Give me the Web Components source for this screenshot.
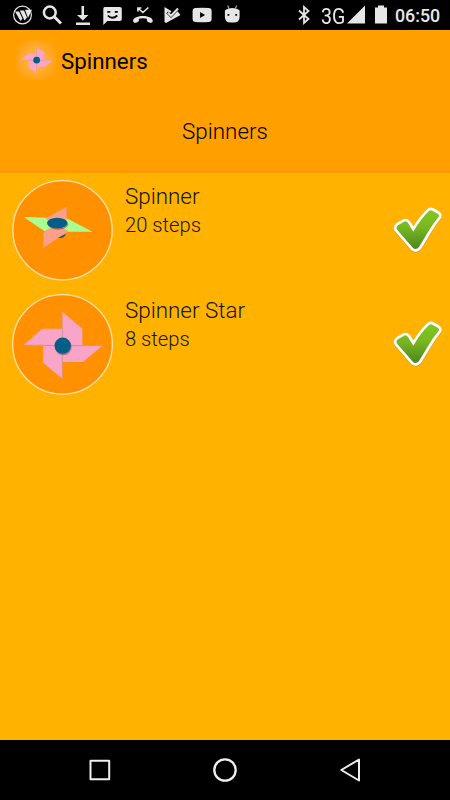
<!DOCTYPE html>
<html lang="en">
<head>
<meta charset="utf-8">
<title>Spinners</title>
<style>
  html, body {
    margin: 0;
    height: 100%;
    overflow: hidden;
    background: #ffb300;
  }
</style>
</head>
<body>
<phone-screen>
  <status-bar slot="status" time="06:50" network="3G"></status-bar>
  <app-header label="Spinners">Spinners</app-header>
  <spinner-row steps="20" art="spinner">Spinner</spinner-row>
  <spinner-row steps="8" art="star">Spinner Star</spinner-row>
  <nav-bar slot="nav"></nav-bar>
</phone-screen>
<script>
"use strict";

const starBlades = `
  <g stroke="#c98f9f" stroke-width="1.2">
    <path stroke="none" fill="#f8a5c8" d="M187 80L247 131V182H187ZM187 182H307L249 231H187ZM187 182V281L129 233V182ZM187 182L71 180L127 131H187Z"/>
    <path stroke-width="2.6" d="M187 131V231M129 181L187 182H247"/>
    <path d="M187 84V131M187 231V277M75 180H129M247 182H303"/>
  </g>`;

const art = {
  star: `
    <svg viewBox="36 27 303 303">
      <circle cx="187.5" cy="178" r="149.5" fill="#ff9000" stroke="#ffdfab" stroke-width="4"/>
      ${starBlades}
      <circle cx="190" cy="186" r="25" fill="#803c42" opacity=".5" filter="blur(2px)"/>
      <circle cx="188" cy="182" r="24.5" fill="#005f87"/>
    </svg>`,
  spinner: `
    <svg viewBox="36 45 303 303">
      <circle cx="187.5" cy="195.500" r="149" fill="#ff9000" stroke="#ffdfab" stroke-width="4"/>
      <path fill="#aaff90" d="M71 156L143 158L160 186L134 199ZM199 159L277 200H203L175 188Z"/>
      <path fill="#ff9e89" d="M200 125V180L165 183L137 160ZM131 201L152 189H190L205 199L129 249Z"/>
      <path fill="#005f87" d="M174 219L197 206C197 214 186 221 174 219Z"/>
      <ellipse cx="174" cy="178" rx="31" ry="16" fill="#6b4538" opacity=".55" filter="blur(2px)"/>
      <ellipse cx="171.500" cy="174" rx="30.500" ry="16" fill="#005f87"/>
    </svg>`
};

class PhoneScreen extends HTMLElement {
  constructor() {
    super();
    this.attachShadow({ mode: 'open' }).innerHTML = `
    <style>
      :host {
        display: flex;
        flex-direction: column;
        width: 450px;
        height: 800px;
        background: #ffb300;
        color: #000;
        font-family: Roboto, sans-serif;
      }
      main {
        flex: 1;
        min-height: 0;
      }
    </style>
    <slot name="status"></slot>
    <main><slot></slot></main>
    <slot name="nav"></slot>
    `;
  }
}

class StatusBar extends HTMLElement {
  connectedCallback() {
    this.attachShadow({ mode: 'open' }).innerHTML = `
    <style>
      :host {
        display: flex;
        justify-content: space-between;
        height: 30px;
        box-sizing: border-box;
        padding: 0 10px 0 12px;
        background: #000;
        color: #e8e8e8;
      }
      div {
        display: flex;
        align-items: center;
      }
      .notifications {
        gap: 7.9px;
      }
      svg {
        display: block;
        width: 22px;
        height: 30px;
        fill: #e6e6e6;
      }
      .network {
        display: block;
        font-size: 22.5px;
        line-height: 30px;
        padding-top: 1px;
        width: 26px;
        margin-left: 10px;
        transform: scaleX(.87);
        transform-origin: left;
      }
      .signal { width: 18px; }
      .bluetooth { width: 14px; }
      .battery { width: 12px; margin-left: 10px; }
      .time {
        font-size: 17.8px;
        font-weight: 500;
        line-height: 30px;
        width: 45px;
        margin-left: 8px;
        padding-top: 1px;
        white-space: nowrap;
      }
    </style>
    <div class="notifications">
      <svg viewBox="12 0 22 30"><circle cx="22.500" cy="15" r="8.900" fill="none" stroke="#e6e6e6" stroke-width="1.200"/><path d="M15 11.500H19L22.500 18.500L20.500 21ZM19.800 10.500H24L27 17.500L24.500 20.500ZM25 9.800H32L28 18Z"/></svg>
      <svg viewBox="42 0 22 30"><circle cx="49.800" cy="12.500" r="5.900" fill="none" stroke="#e6e6e6" stroke-width="2.500"/><path d="M54 16.500L61 23.500" stroke="#e6e6e6" stroke-width="3"/></svg>
      <svg viewBox="72 0 22 30"><path d="M81.500 6H84V15H88.500L82.800 20.500L77 15H81.500ZM76 22.500H90V25H76Z"/></svg>
      <svg viewBox="101.700 0 22 30"><path d="M104.500 7H119.500Q121.500 7 121.500 9V19Q121.500 21 119.500 21H107L103 25V9Q103 7 104.500 7Z"/><path d="M107 11.800H110M114.500 11.800H117.500M107.500 15.500Q112 20 117 15.500" fill="none" stroke="#000" stroke-width="1.700"/></svg>
      <svg viewBox="131.600 0 22 30"><path d="M133 22C131.500 19.500 135 16 142.500 16S153.500 19.500 152 22L150.500 23Q147.500 22.500 146.500 21V18.800Q142.500 17.600 138.500 18.800V21Q137.500 22.500 134.500 23Z"/><path d="M137.500 11.500V8H141M138 8.500L142.500 12.500L148 7.500" fill="none" stroke="#e6e6e6" stroke-width="1.600"/></svg>
      <svg viewBox="161.500 0 22 30"><path fill-rule="evenodd" d="M165 7L172 11.200L170.500 13L168.500 11.500L166.800 13.200L171.500 18L178 11.200L181 15L166.500 23L165 22Z"/><path d="M168.300 12.800L171.500 15.800L178.500 8.500" fill="none" stroke="#e6e6e6" stroke-width="2"/></svg>
      <svg viewBox="191.400 0 22 30"><path fill-rule="evenodd" d="M196 8Q202.500 7.300 209 8Q212 8 212 11V19Q212 22 209 22Q202.500 22.700 196 22Q193 22 193 19V11Q193 8 196 8ZM200.500 12V18L205.500 15Z"/></svg>
      <svg viewBox="221.300 0 22 30"><path fill-rule="evenodd" d="M225.200 10.500Q227 9 229 8.500Q232.500 7.700 236 8.500Q238.500 9 239.900 10.500V17Q239.900 22.500 234 22.500H231Q225.200 22.500 225.200 17ZM227.800 14V15.800H229.600V14ZM235.600 14V15.800H237.400V14Z"/><path d="M229.500 9L228 5.500M235.500 9L237 5.500" stroke="#a8a8a8" stroke-width="1.200"/></svg>
    </div>
    <div>
      <svg class="bluetooth" viewBox="297 0 14 30"><path d="M299 10.500L308.500 19L304 23V7L308.500 11L299 19.500" fill="none" stroke="#e6e6e6" stroke-width="1.800"/></svg>
      <span class="network">${this.getAttribute('network')}</span>
      <svg class="signal" viewBox="347 0 18 30"><path d="M347 23.500L365 5.500V23.500Z"/></svg>
      <svg class="battery" viewBox="375 0 12 30"><path d="M378 5.500H384V7.500H387V23.500H375V7.500H378Z"/></svg>
      <span class="time">${this.getAttribute('time')}</span>
    </div>
    `;
  }
}

class AppHeader extends HTMLElement {
  connectedCallback() {
    this.attachShadow({ mode: 'open' }).innerHTML = `
    <style>
      :host {
        display: block;
        height: 143px;
        box-sizing: border-box;
        background: linear-gradient(#ffa000 140px, #ff9500 142px, #ff9a00 143px);
      }
      .bar {
        display: flex;
        align-items: center;
        height: 61px;
        padding-left: 16px;
        gap: 5px;
        font-size: 22.3px;
      }
      .icon {
        display: grid;
        place-items: center;
        width: 40px;
        height: 40px;
        margin-top: -1px;
        border-radius: 10px;
        background: radial-gradient(#ffb94c, #ffa827 55%, #ffa20a 75%);
      }
      .icon svg { width: 33px; height: 28px; }
      .bar span { padding-top: 1px; }
      h1 {
        margin: 0;
        font-size: 22.4px;
        font-weight: 300;
        line-height: 80px;
        text-align: center;
      }
    </style>
    <div class="bar">
      <div class="icon">
        <svg viewBox="66 78 242 206" preserveAspectRatio="none">${starBlades}<circle cx="188" cy="182" r="24.5" fill="#005f87"/></svg>
      </div>
      <span>${this.getAttribute('label')}</span>
    </div>
    <h1><slot></slot></h1>
    `;
  }
}

class SpinnerRow extends HTMLElement {
  connectedCallback() {
    this.attachShadow({ mode: 'open' }).innerHTML = `
    <style>
      :host {
        display: flex;
        height: 114px;
        box-sizing: border-box;
        padding: 7px 8px 6px 12px;
        font-weight: 300;
        color: #15151c;
      }
      .art svg {
        display: block;
        width: 101px;
        height: 101px;
      }
      .text {
        flex: 1;
        padding: 1px 0 0 12px;
      }
      .name {
        font-size: 22.4px;
        line-height: 30px;
      }
      .steps {
        font-size: 20.2px;
        line-height: 28px;
      }
      .check {
        align-self: center;
        width: 50px;
        height: 50px;
      }
    </style>
    <div class="art">${art[this.getAttribute('art')]}</div>
    <div class="text">
      <div class="name"><slot></slot></div>
      <div class="steps">${this.getAttribute('steps')} steps</div>
    </div>
    <svg class="check" viewBox="6 9 150 150">
      <defs>
        <linearGradient id="green" x1="0" y1="0" x2="0" y2="1">
          <stop offset="0" stop-color="#83c81e"/>
          <stop offset=".45" stop-color="#78b621"/>
          <stop offset="1" stop-color="#4c861d"/>
        </linearGradient>
        <path id="tick" d="M24 67L42 56Q49 53 54 60L70 86Q92 48 116 25Q121 20 127 23L143 32Q150 37 145 43C121 72 106 103 87 132Q78 143 69 135L22 81Q16 73 24 67Z"/>
      </defs>
      <use href="#tick" y="3" stroke="#805800" stroke-width="16" opacity=".25" filter="blur(2px)"/>
      <use href="#tick" fill="#fff" stroke="#fff" stroke-width="16" stroke-linejoin="round"/>
      <use href="#tick" fill="url(#green)"/>
    </svg>
    `;
  }
}

class NavBar extends HTMLElement {
  constructor() {
    super();
    this.attachShadow({ mode: 'open' }).innerHTML = `
    <style>
      :host {
        display: flex;
        justify-content: center;
        align-items: center;
        gap: 95px;
        height: 60px;
        background: #000;
      }
      svg {
        width: 30px;
        height: 30px;
        fill: none;
        stroke: #eee;
        stroke-width: 2;
        stroke-linejoin: round;
      }
    </style>
    <svg viewBox="0 0 30 30"><path d="M5.500 5.800H24.200V24.200H5.500Z"/></svg>
    <svg viewBox="0 0 30 30"><circle cx="15" cy="15" r="10.700" stroke-width="2.300"/></svg>
    <svg viewBox="0 0 30 30"><path d="M24 4.500V25.500L6.300 15Z"/></svg>
    `;
  }
}

customElements.define('phone-screen', PhoneScreen);
customElements.define('status-bar', StatusBar);
customElements.define('app-header', AppHeader);
customElements.define('spinner-row', SpinnerRow);
customElements.define('nav-bar', NavBar);
</script>
</body>
</html>
